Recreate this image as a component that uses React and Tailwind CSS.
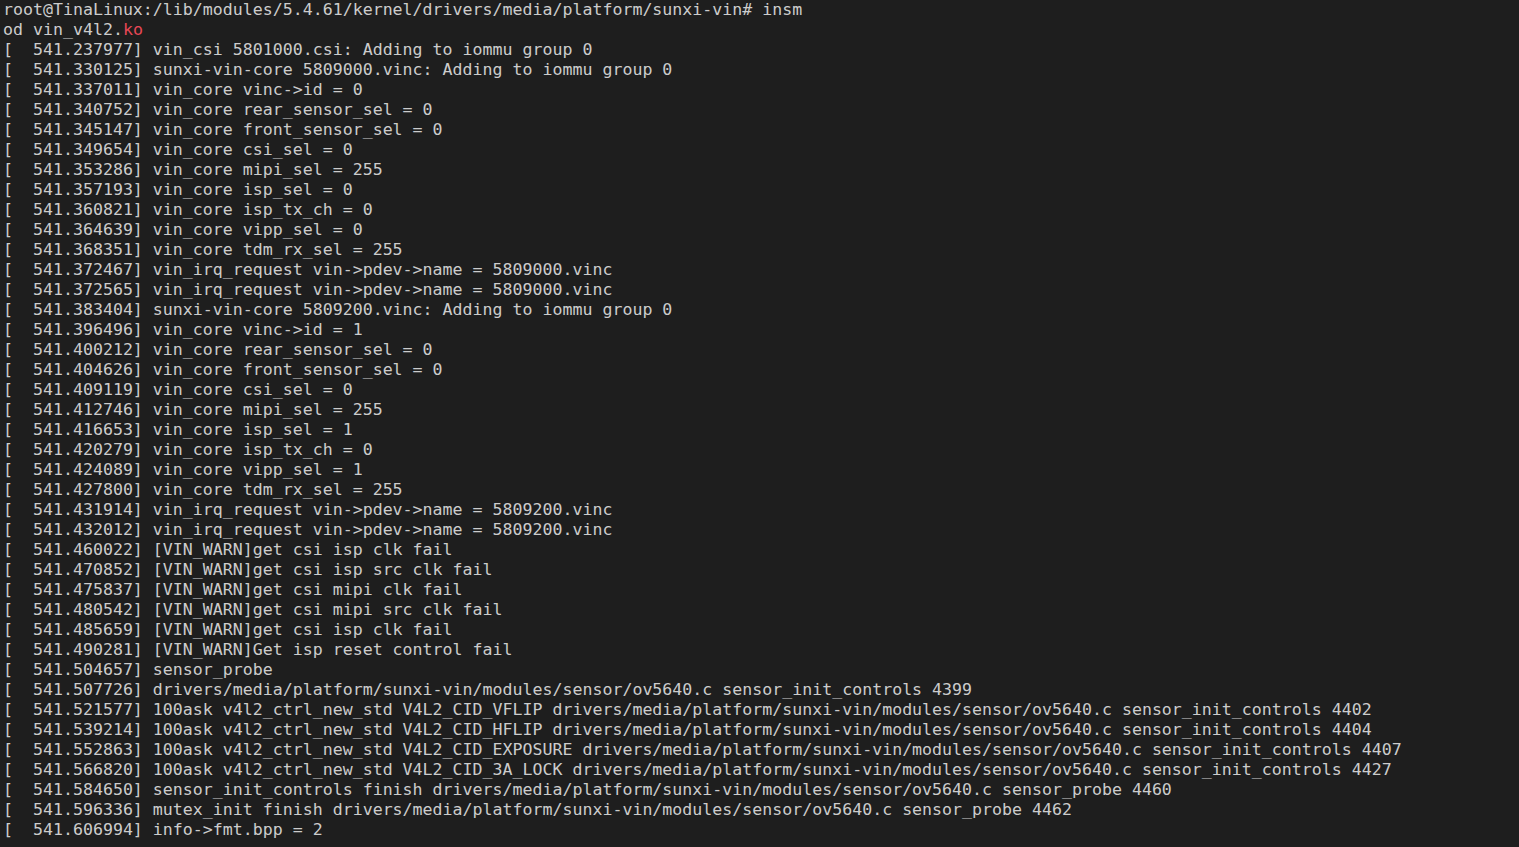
const logLines = [
  "[  541.237977] vin_csi 5801000.csi: Adding to iommu group 0",
  "[  541.330125] sunxi-vin-core 5809000.vinc: Adding to iommu group 0",
  "[  541.337011] vin_core vinc->id = 0",
  "[  541.340752] vin_core rear_sensor_sel = 0",
  "[  541.345147] vin_core front_sensor_sel = 0",
  "[  541.349654] vin_core csi_sel = 0",
  "[  541.353286] vin_core mipi_sel = 255",
  "[  541.357193] vin_core isp_sel = 0",
  "[  541.360821] vin_core isp_tx_ch = 0",
  "[  541.364639] vin_core vipp_sel = 0",
  "[  541.368351] vin_core tdm_rx_sel = 255",
  "[  541.372467] vin_irq_request vin->pdev->name = 5809000.vinc",
  "[  541.372565] vin_irq_request vin->pdev->name = 5809000.vinc",
  "[  541.383404] sunxi-vin-core 5809200.vinc: Adding to iommu group 0",
  "[  541.396496] vin_core vinc->id = 1",
  "[  541.400212] vin_core rear_sensor_sel = 0",
  "[  541.404626] vin_core front_sensor_sel = 0",
  "[  541.409119] vin_core csi_sel = 0",
  "[  541.412746] vin_core mipi_sel = 255",
  "[  541.416653] vin_core isp_sel = 1",
  "[  541.420279] vin_core isp_tx_ch = 0",
  "[  541.424089] vin_core vipp_sel = 1",
  "[  541.427800] vin_core tdm_rx_sel = 255",
  "[  541.431914] vin_irq_request vin->pdev->name = 5809200.vinc",
  "[  541.432012] vin_irq_request vin->pdev->name = 5809200.vinc",
  "[  541.460022] [VIN_WARN]get csi isp clk fail",
  "[  541.470852] [VIN_WARN]get csi isp src clk fail",
  "[  541.475837] [VIN_WARN]get csi mipi clk fail",
  "[  541.480542] [VIN_WARN]get csi mipi src clk fail",
  "[  541.485659] [VIN_WARN]get csi isp clk fail",
  "[  541.490281] [VIN_WARN]Get isp reset control fail",
  "[  541.504657] sensor_probe",
  "[  541.507726] drivers/media/platform/sunxi-vin/modules/sensor/ov5640.c sensor_init_controls 4399",
  "[  541.521577] 100ask v4l2_ctrl_new_std V4L2_CID_VFLIP drivers/media/platform/sunxi-vin/modules/sensor/ov5640.c sensor_init_controls 4402",
  "[  541.539214] 100ask v4l2_ctrl_new_std V4L2_CID_HFLIP drivers/media/platform/sunxi-vin/modules/sensor/ov5640.c sensor_init_controls 4404",
  "[  541.552863] 100ask v4l2_ctrl_new_std V4L2_CID_EXPOSURE drivers/media/platform/sunxi-vin/modules/sensor/ov5640.c sensor_init_controls 4407",
  "[  541.566820] 100ask v4l2_ctrl_new_std V4L2_CID_3A_LOCK drivers/media/platform/sunxi-vin/modules/sensor/ov5640.c sensor_init_controls 4427",
  "[  541.584650] sensor_init_controls finish drivers/media/platform/sunxi-vin/modules/sensor/ov5640.c sensor_probe 4460",
  "[  541.596336] mutex_init finish drivers/media/platform/sunxi-vin/modules/sensor/ov5640.c sensor_probe 4462",
  "[  541.606994] info->fmt.bpp = 2",
];

export default function App() {
  return (
    <div className="w-[1519px] h-[847px] overflow-hidden bg-[#1e1e1e] text-[#cccccc] pl-[3px] pt-0 font-['DejaVu_Sans_Mono',monospace] text-[16.6px] leading-[20px] whitespace-pre">
      <div>root@TinaLinux:/lib/modules/5.4.61/kernel/drivers/media/platform/sunxi-vin# insm</div>
      <div>
        od vin_v4l2.<span className="text-[#e74856]">ko</span>
      </div>
      {logLines.map((line, i) => (
        <div key={i}>{line}</div>
      ))}
    </div>
  );
}
